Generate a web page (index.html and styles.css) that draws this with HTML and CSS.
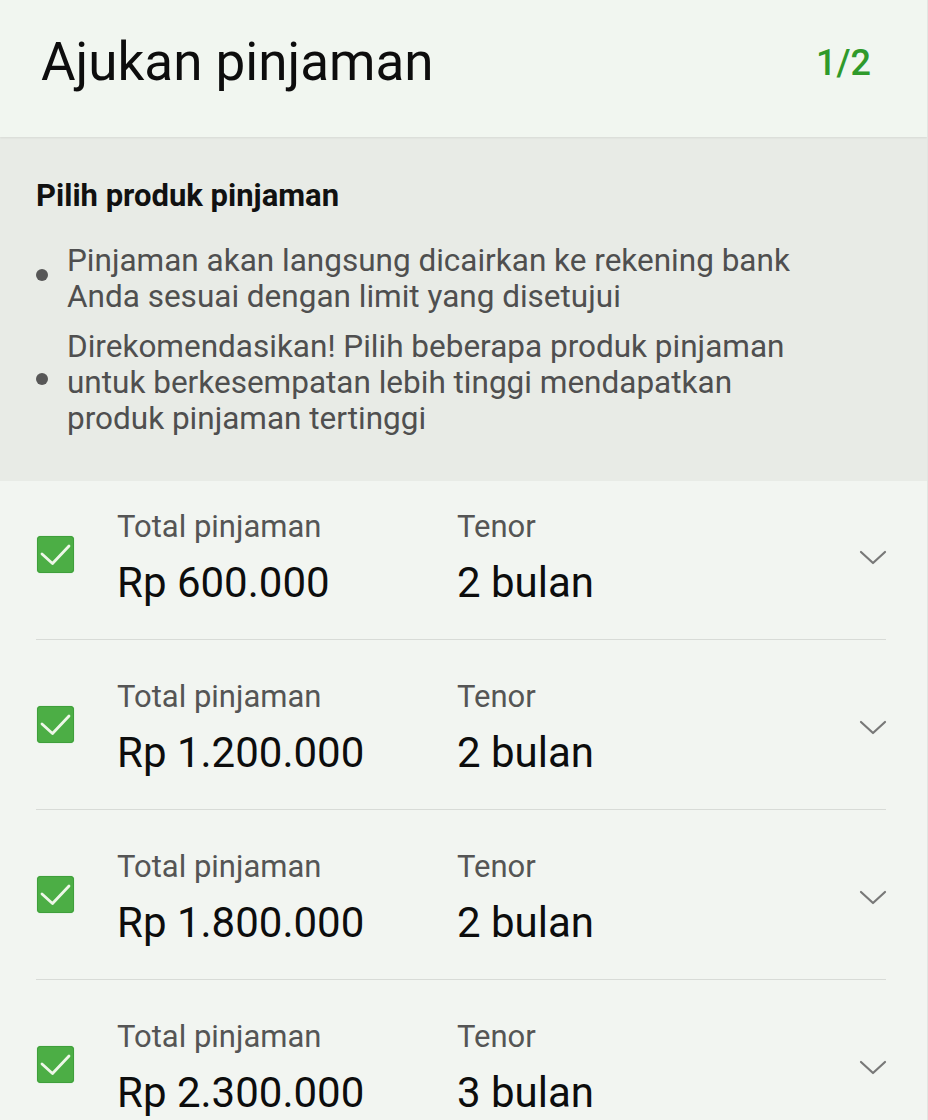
FILE: index.html
```html
<!DOCTYPE html>
<html lang="id">
<head>
<meta charset="utf-8">
<title>Ajukan pinjaman</title>
<link rel="stylesheet" href="styles.css">
</head>
<body>
<div class="screen">
  <header class="topbar">
    <h1 class="title">Ajukan pinjaman</h1>
    <span class="step">1/2</span>
  </header>

  <section class="info">
    <h2 class="info-title">Pilih produk pinjaman</h2>
    <ul class="bullets">
      <li class="bullet-item"><span class="dot"></span><span class="bullet-text">Pinjaman akan langsung dicairkan ke rekening bank<br>Anda sesuai dengan limit yang disetujui</span></li>
      <li class="bullet-item"><span class="dot"></span><span class="bullet-text">Direkomendasikan! Pilih beberapa produk pinjaman<br>untuk berkesempatan lebih tinggi mendapatkan<br>produk pinjaman tertinggi</span></li>
    </ul>
  </section>

  <ul class="products">
    <li class="product">
      <span class="check"><svg viewBox="0 0 37 37" width="37" height="37"><path d="M5 18 L15.5 27.5 L32 10" fill="none" stroke="#eef7e8" stroke-width="2.8" stroke-linecap="round" stroke-linejoin="round"/></svg></span>
      <div class="col col-amount"><span class="label">Total pinjaman</span><span class="value">Rp 600.000</span></div>
      <div class="col col-tenor"><span class="label">Tenor</span><span class="value">2 bulan</span></div>
      <span class="chev"><svg viewBox="0 0 28 16" width="28" height="16"><path d="M2 2 L14 13 L26 2" fill="none" stroke="#787878" stroke-width="2.2" stroke-linecap="round" stroke-linejoin="round"/></svg></span>
    </li>
    <li class="product">
      <span class="check"><svg viewBox="0 0 37 37" width="37" height="37"><path d="M5 18 L15.5 27.5 L32 10" fill="none" stroke="#eef7e8" stroke-width="2.8" stroke-linecap="round" stroke-linejoin="round"/></svg></span>
      <div class="col col-amount"><span class="label">Total pinjaman</span><span class="value">Rp 1.200.000</span></div>
      <div class="col col-tenor"><span class="label">Tenor</span><span class="value">2 bulan</span></div>
      <span class="chev"><svg viewBox="0 0 28 16" width="28" height="16"><path d="M2 2 L14 13 L26 2" fill="none" stroke="#787878" stroke-width="2.2" stroke-linecap="round" stroke-linejoin="round"/></svg></span>
    </li>
    <li class="product">
      <span class="check"><svg viewBox="0 0 37 37" width="37" height="37"><path d="M5 18 L15.5 27.5 L32 10" fill="none" stroke="#eef7e8" stroke-width="2.8" stroke-linecap="round" stroke-linejoin="round"/></svg></span>
      <div class="col col-amount"><span class="label">Total pinjaman</span><span class="value">Rp 1.800.000</span></div>
      <div class="col col-tenor"><span class="label">Tenor</span><span class="value">2 bulan</span></div>
      <span class="chev"><svg viewBox="0 0 28 16" width="28" height="16"><path d="M2 2 L14 13 L26 2" fill="none" stroke="#787878" stroke-width="2.2" stroke-linecap="round" stroke-linejoin="round"/></svg></span>
    </li>
    <li class="product">
      <span class="check"><svg viewBox="0 0 37 37" width="37" height="37"><path d="M5 18 L15.5 27.5 L32 10" fill="none" stroke="#eef7e8" stroke-width="2.8" stroke-linecap="round" stroke-linejoin="round"/></svg></span>
      <div class="col col-amount"><span class="label">Total pinjaman</span><span class="value">Rp 2.300.000</span></div>
      <div class="col col-tenor"><span class="label">Tenor</span><span class="value">3 bulan</span></div>
      <span class="chev"><svg viewBox="0 0 28 16" width="28" height="16"><path d="M2 2 L14 13 L26 2" fill="none" stroke="#787878" stroke-width="2.2" stroke-linecap="round" stroke-linejoin="round"/></svg></span>
    </li>
  </ul>
</div>
</body>
</html>
```

FILE: styles.css
```css
* { box-sizing: border-box; }
html, body {
  margin: 0;
  padding: 0;
  height: 100%;
  overflow: hidden;
  background: #f2f5f1;
}
body {
  font-family: Roboto, "Noto Sans", "Liberation Sans", sans-serif;
  color: #111;
}
.screen {
  width: 928px;
  height: 1120px;
  overflow: hidden;
  background: #f2f5f1;
  border-right: 1px solid #e2e5e1;
}
.topbar {
  height: 137px;
  display: flex;
  justify-content: space-between;
  align-items: flex-start;
  padding: 31px 56px 0 41px;
  background: #f1f6f0;
  box-shadow: 0 1px 2px rgba(0,0,0,0.08);
  position: relative;
  z-index: 1;
}
.title {
  margin: 0;
  font-size: 53px;
  line-height: 62px;
  font-weight: 400;
  color: #0d0d0d;
}
.step {
  margin-top: 11px;
  font-size: 36px;
  line-height: 42px;
  font-weight: 500;
  color: #2f9a2b;
}
.info {
  background: #e8ebe6;
  padding: 41px 0 48px 36px;
  height: 344px;
}
.info-title {
  margin: 0 0 29px;
  font-size: 31px;
  line-height: 36px;
  font-weight: 700;
  color: #111;
}
.bullets {
  list-style: none;
  margin: 0;
  padding: 0;
  display: flex;
  flex-direction: column;
  gap: 14px;
}
.bullet-item {
  display: flex;
  align-items: center;
}
.dot {
  width: 12px;
  height: 12px;
  border-radius: 50%;
  background: #575757;
  flex: none;
  margin-right: 19px;
  margin-bottom: 8px;
}
.bullet-text {
  font-size: 31.5px;
  line-height: 36px;
  color: #4f4f4f;
}
.products {
  list-style: none;
  margin: 0;
  padding: 0;
}
.product {
  display: flex;
  align-items: center;
  margin: 0 41px 0 36px;
  padding: 39px 0 32px 1px;
  border-bottom: 1px solid #d8dbd7;
}
.product:first-child {
  padding-top: 28px;
}
.check {
  flex: none;
  width: 37px;
  height: 37px;
  border-radius: 4px;
  background: #4cae45;
  box-shadow: inset 0 0 0 1px #3f9f3b, 0 0 1px #7fd07a;
  margin-right: 43px;
  margin-bottom: 8px;
  display: flex;
}
.col {
  display: flex;
  flex-direction: column;
}
.col-amount { width: 340px; }
.col-tenor { flex: 1; }
.label {
  font-size: 31px;
  line-height: 36px;
  color: #555;
  margin-bottom: 14px;
}
.value {
  font-size: 42px;
  line-height: 48px;
  color: #0d0d0d;
}
.chev {
  flex: none;
  display: flex;
  margin-right: -1px;
}
```
